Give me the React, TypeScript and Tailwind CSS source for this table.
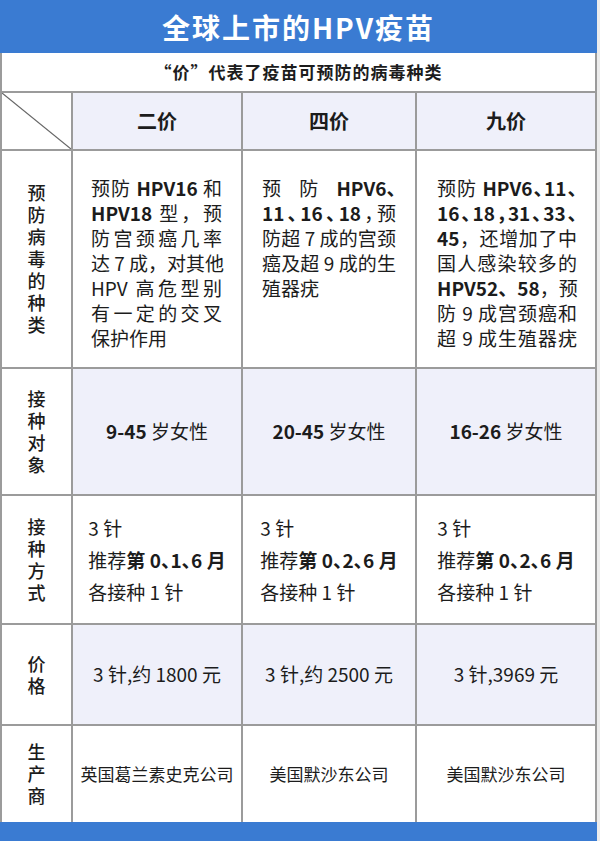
import React from "react";

const FONT = "font-['Noto_Sans_CJK_SC','Noto_Sans',sans-serif]";

function Line({ children, last, tight }: { children: React.ReactNode; last?: boolean; tight?: boolean }) {
  const base = last ? "whitespace-nowrap" : "whitespace-nowrap text-justify [text-align-last:justify]";
  return <div className={tight ? `${base} [font-feature-settings:'halt']` : base}>{children}</div>;
}

function Label({ text }: { text: string }) {
  return (
    <div className="bg-white flex items-center justify-center">
      <div className="[writing-mode:vertical-rl] text-[18px] leading-[18px] tracking-[4px] font-medium text-[#1c1c1c] pt-[4px]">
        {text}
      </div>
    </div>
  );
}

export default function App() {
  const lav = "bg-[#eff0fa]";
  return (
    <div className={`w-[600px] h-[841px] bg-[#ececec] ${FONT} text-[#1c1c1c]`}>
      <div className="w-[597px]">
        <div className="h-[53px] bg-[#3a7bd2] flex items-center justify-center">
          <span className="text-white text-[28px] font-bold tracking-[2px] leading-none">全球上市的HPV疫苗</span>
        </div>
        <div className="grid grid-cols-[69px_168px_172px_178px] grid-rows-[38px_56px_216px_125px_127px_99px_96px] gap-[2px] px-[2px] bg-[#9b9b9b]">
          <div className="col-span-4 bg-white flex items-center justify-center">
            <span className="text-[17px] font-bold tracking-[1px]">“价”代表了疫苗可预防的病毒种类</span>
          </div>

          <div className="bg-white">
            <svg className="w-full h-full block" viewBox="0 0 100 100" preserveAspectRatio="none">
              <line x1="0" y1="0" x2="100" y2="100" stroke="#666" strokeWidth="1.2" vectorEffect="non-scaling-stroke" />
            </svg>
          </div>
          <div className={`${lav} flex items-center justify-center text-[20px] font-bold`}>二价</div>
          <div className={`${lav} flex items-center justify-center text-[20px] font-bold`}>四价</div>
          <div className={`${lav} flex items-center justify-center text-[20px] font-bold`}>九价</div>

          <Label text="预防病毒的种类" />
          <div className="bg-white pt-[24px] pl-[18px] pr-[19px] text-[19px] leading-[25px]">
            <Line>预防 <b>HPV16</b> 和</Line>
            <Line><b>HPV18</b> 型，预</Line>
            <Line>防宫颈癌几率</Line>
            <Line>达 7 成，对其他</Line>
            <Line>HPV 高危型别</Line>
            <Line>有一定的交叉</Line>
            <Line last>保护作用</Line>
          </div>
          <div className="bg-white pt-[24px] pl-[19px] pr-[19px] text-[19px] leading-[25px]">
            <Line>预 防 <b className="inline-block [font-feature-settings:'halt']">HPV6、</b></Line>
            <Line tight><b>11、16、18</b>，预</Line>
            <Line>防超 7 成的宫颈</Line>
            <Line>癌及超 9 成的生</Line>
            <Line last>殖器疣</Line>
          </div>
          <div className="bg-white pt-[24px] pl-[20px] pr-[18px] text-[19px] leading-[25px]">
            <Line tight>预防 <b>HPV6、11、</b></Line>
            <Line tight><b>16、18，31、33、</b></Line>
            <Line><b>45</b>，还增加了中</Line>
            <Line>国人感染较多的</Line>
            <Line><b>HPV52、58</b>，预</Line>
            <Line>防 9 成宫颈癌和</Line>
            <Line>超 9 成生殖器疣</Line>
          </div>

          <Label text="接种对象" />
          <div className={`${lav} flex items-center justify-center text-[19px]`}><span><b>9-45</b> 岁女性</span></div>
          <div className={`${lav} flex items-center justify-center text-[19px]`}><span><b>20-45</b> 岁女性</span></div>
          <div className={`${lav} flex items-center justify-center text-[19px]`}><span><b>16-26</b> 岁女性</span></div>

          <Label text="接种方式" />
          {["0、1、6", "0、2、6", "0、2、6"].map((s, i) => (
            <div key={i} className="bg-white flex items-center justify-center text-[19px] leading-[32px]">
              <div>
                <div>3 针</div>
                <div>推荐<b className="[font-feature-settings:'halt']">第 {s} 月</b></div>
                <div>各接种 1 针</div>
              </div>
            </div>
          ))}

          <Label text="价格" />
          <div className={`${lav} flex items-center justify-center text-[19px]`}>3 针,约 1800 元</div>
          <div className={`${lav} flex items-center justify-center text-[19px]`}>3 针,约 2500 元</div>
          <div className={`${lav} flex items-center justify-center text-[19px]`}>3 针,3969 元</div>

          <Label text="生产商" />
          <div className="bg-white flex items-center justify-center text-[17px]">英国葛兰素史克公司</div>
          <div className="bg-white flex items-center justify-center text-[17px]">美国默沙东公司</div>
          <div className="bg-white flex items-center justify-center text-[17px]">美国默沙东公司</div>
        </div>
        <div className="h-[19px] bg-[#3a7bd2]" />
      </div>
    </div>
  );
}
